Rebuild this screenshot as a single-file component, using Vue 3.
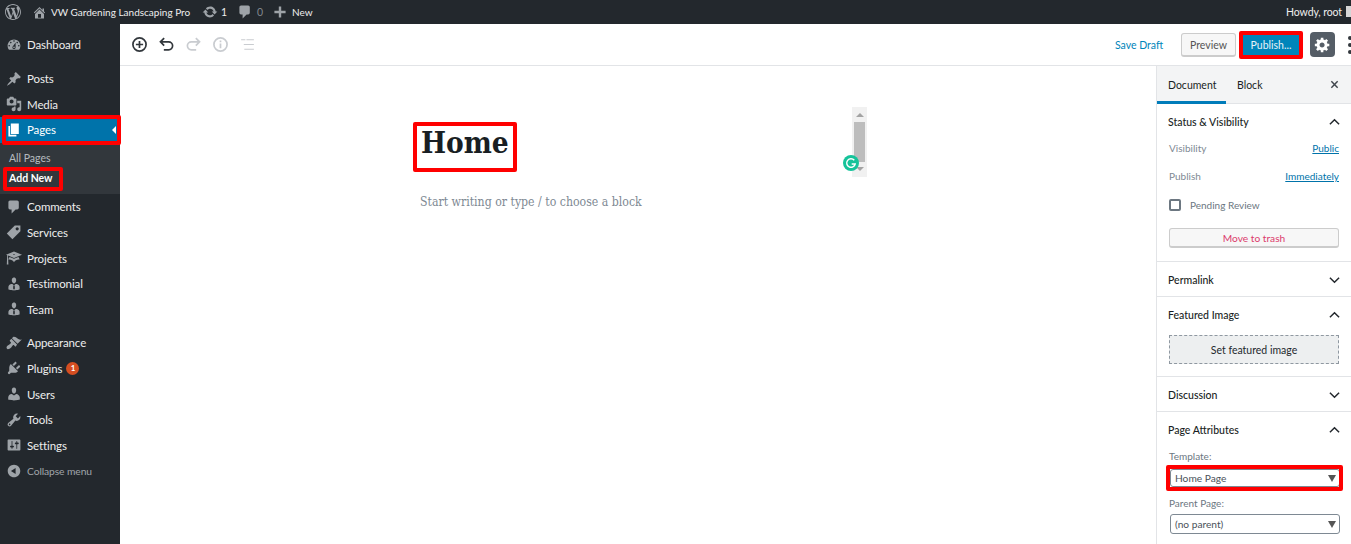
<script setup>
const P = {
  dash: 'M3.76 16h12.48c1.1-1.37 1.76-3.11 1.76-5 0-4.42-3.58-8-8-8s-8 3.58-8 8c0 1.89.66 3.63 1.76 5zM10 4c.55 0 1 .45 1 1s-.45 1-1 1-1-.45-1-1 .45-1 1-1zM6 6c.55 0 1 .45 1 1s-.45 1-1 1-1-.45-1-1 .45-1 1-1zm8 0c.55 0 1 .45 1 1s-.45 1-1 1-1-.45-1-1 .45-1 1-1zm-5.37 5.55L12 7v6c0 1.1-.9 2-2 2s-2-.9-2-2c0-.57.24-1.08.63-1.45zM4 10c.55 0 1 .45 1 1s-.45 1-1 1-1-.45-1-1 .45-1 1-1zm12 0c.55 0 1 .45 1 1s-.45 1-1 1-1-.45-1-1 .45-1 1-1zm-5 3c0-.55-.45-1-1-1s-1 .45-1 1 .45 1 1 1 1-.45 1-1z',
  pin: 'M10.44 3.02l1.82-1.82 6.36 6.35-1.83 1.82c-1.05-.68-2.48-.57-3.41.36l-.75.75c-.92.93-1.04 2.35-.35 3.41l-1.83 1.82-2.41-2.41-2.8 2.79c-.42.42-3.38 2.71-3.8 2.29s1.86-3.39 2.28-3.81l2.79-2.79L4.1 9.36l1.83-1.82c1.05.69 2.48.57 3.4-.36l.75-.75c.93-.92 1.05-2.35.36-3.41z',
  media: 'M13 11V4c0-.55-.45-1-1-1h-1.67L9 1H5L3.67 3H2c-.55 0-1 .45-1 1v7c0 .55.45 1 1 1h10c.55 0 1-.45 1-1zM7 4.5c1.38 0 2.5 1.12 2.5 2.5S8.38 9.5 7 9.5 4.5 8.38 4.5 7 5.62 4.5 7 4.5zM14 6h5v10.5c0 1.38-1.12 2.5-2.5 2.5S14 17.88 14 16.5s1.12-2.5 2.5-2.5c.17 0 .34.02.5.05V9h-3V6zm-4 8.05V13h2v3.5c0 1.38-1.12 2.5-2.5 2.5S7 17.88 7 16.5 8.12 14 9.5 14c.17 0 .34.02.5.05z',
  page: 'M6 15V2h10v13H6zm-1 1h8v2H3V5h2v11z',
  comment: 'M5 2h9c1.1 0 2 .9 2 2v7c0 1.1-.9 2-2 2h-2l-5 5v-5H5c-1.1 0-2-.9-2-2V4c0-1.1.9-2 2-2z',
  tag: 'M11 2h7v7L8 19l-7-7zm3 6c1.1 0 2-.9 2-2s-.9-2-2-2-2 .9-2 2 .9 2 2 2z',
  learn: 'M10 10L2.54 7.02 3 18H1l.48-11.41L0 6l10-4 10 4zm0-5c-.55 0-1 .22-1 .5s.45.5 1 .5 1-.22 1-.5-.45-.5-1-.5zm0 6l5.57-2.23c.71.94 1.2 2.07 1.36 3.3-.3-.04-.61-.07-.93-.07-2.55 0-4.78 1.37-6 3.41C8.78 13.37 6.55 12 4 12c-.32 0-.63.03-.93.07.16-1.23.65-2.36 1.36-3.3z',
  man: 'M7.3 6l-.03-.19c-.04-.37-.05-.73-.03-1.08.02-.36.1-.71.25-1.04.14-.32.31-.61.52-.86s.49-.46.83-.6c.34-.15.72-.23 1.13-.23.69 0 1.26.2 1.71.59s.76.87.91 1.44.18 1.16.09 1.78l-.03.19c-.01.09-.05.25-.11.48-.05.24-.12.47-.2.69-.08.21-.19.45-.34.72-.14.27-.3.49-.47.69-.18.19-.4.34-.67.48-.27.13-.55.19-.86.19s-.59-.06-.87-.19c-.26-.13-.49-.29-.67-.5-.18-.2-.34-.42-.49-.66-.15-.25-.26-.49-.34-.73-.09-.25-.16-.47-.21-.67-.06-.21-.1-.37-.12-.5zm9.2 6.24c.41.7.5 1.41.5 2.14v2.49c0 .03-.12.08-.29.13-.18.04-.42.13-.97.27-.55.12-1.1.24-1.65.34s-1.19.19-1.95.27c-.75.08-1.46.12-2.13.12-.68 0-1.39-.04-2.14-.12-.75-.07-1.4-.17-1.98-.27-.58-.11-1.08-.23-1.56-.34-.49-.11-.8-.21-1.06-.29L3 16.87v-2.49c0-.75.07-1.46.46-2.15s.81-1.25 1.5-1.68C5.66 10.12 7.19 10 8 10l1.67 1.67L9 13v3l1.02 1.08L11 16v-3l-.68-1.33L11.97 10c.77 0 2.2.07 2.9.52.71.45 1.21 1.02 1.63 1.72z',
  brush: 'M14.48 11.06L7.41 3.99l1.5-1.5c.5-.56 2.3-.47 3.51.32 1.21.8 1.43 1.28 2.91 2.1 1.18.64 2.45 1.26 4.45.85zm-.71.71L6.7 4.7 4.93 6.47c-.39.39-.39 1.02 0 1.41l1.06 1.06c.39.39.39 1.03 0 1.42-.6.6-1.43 1.11-2.21 1.69-.35.26-.7.53-1.01.84C1.43 13.23 0 15.57 1 17c.8 1.5 3.77.43 5.11-.91.31-.31.58-.66.84-1.01.58-.78 1.09-1.61 1.69-2.21.39-.39 1.02-.39 1.41 0l1.06 1.06c.39.39 1.02.39 1.41 0z',
  plug: 'M13.11 4.36L9.87 7.6 8 5.73l3.24-3.24c.35-.34 1.05-.2 1.56.32.52.51.66 1.21.31 1.55zm-8 1.77l.91-1.12 9.01 9.01-1.19.84c-.71.71-2.63 1.16-3.82 1.16H6.14L4.9 17.26c-.59.59-1.54.59-2.12 0-.59-.58-.59-1.53 0-2.12l1.24-1.24v-3.88c0-1.13.4-3.19 1.09-3.89zm7.26 3.97l3.24-3.24c.34-.35 1.04-.21 1.55.31.52.51.66 1.21.31 1.55l-3.24 3.25z',
  user: 'M10 9.25c-2.27 0-2.73-3.44-2.73-3.44C7 4.02 7.82 2 9.97 2c2.16 0 2.98 2.02 2.71 3.81 0 0-.41 3.44-2.68 3.44zm0 2.57L12.72 10c2.39 0 4.52 2.33 4.52 4.53v2.49s-3.65 1.13-7.24 1.13c-3.65 0-7.24-1.13-7.24-1.13v-2.49c0-2.25 1.94-4.48 4.47-4.48z',
  tool: 'M16.68 9.77c-1.34 1.34-3.3 1.67-4.95.99l-5.41 6.52c-.99.99-2.59.99-3.58 0s-.99-2.59 0-3.57l6.52-5.42c-.68-1.65-.35-3.61.99-4.95 1.28-1.28 3.12-1.62 4.72-1.06l-2.89 2.89 2.82 2.82 2.86-2.87c.53 1.58.18 3.39-1.08 4.65zM3.81 16.21c.4.39 1.04.39 1.43 0 .4-.4.4-1.04 0-1.43-.39-.4-1.03-.4-1.43 0-.39.39-.39 1.03 0 1.43z',
  sliders: 'M18 16V4c0-.55-.45-1-1-1H3c-.55 0-1 .45-1 1v12c0 .55.45 1 1 1h14c.55 0 1-.45 1-1zM8 11h1c.55 0 1 .45 1 1s-.45 1-1 1H8v1.5c0 .28-.22.5-.5.5s-.5-.22-.5-.5V13H6c-.55 0-1-.45-1-1s.45-1 1-1h1V5.5c0-.28.22-.5.5-.5s.5.22.5.5V11zm5-2h-1c-.55 0-1-.45-1-1s.45-1 1-1h1V5.5c0-.28.22-.5.5-.5s.5.22.5.5V7h1c.55 0 1 .45 1 1s-.45 1-1 1h-1v5.5c0 .28-.22.5-.5.5s-.5-.22-.5-.5V9z',
  collapse: 'M10 2.16c4.33 0 7.84 3.51 7.84 7.84s-3.51 7.84-7.84 7.84S2.16 14.33 2.16 10 5.71 2.16 10 2.16zm2 11.72V6.12L6.18 9.97z',
  home: 'M16 8.5l1.53 1.53-1.06 1.06L10 4.62l-6.47 6.47-1.06-1.06L10 2.5l4 4v-2h2v4zm-6-2.46l6 5.99V18H4v-5.97zM12 17v-5H8v5h4z',
  update: 'M10.2 3.28c3.53 0 6.43 2.61 6.92 6h2.08l-3.5 4-3.5-4h2.32c-.45-1.97-2.21-3.45-4.32-3.45-1.45 0-2.73.71-3.54 1.78L4.95 5.66C6.23 4.2 8.11 3.28 10.2 3.28zm-.4 13.44c-3.52 0-6.43-2.61-6.92-6H.8l3.5-4c1.17 1.33 2.33 2.67 3.5 4H5.48c.45 1.97 2.21 3.45 4.32 3.45 1.45 0 2.73-.71 3.54-1.78l1.71 1.95c-1.28 1.46-3.15 2.38-5.25 2.38z',
  plus: 'M17 8.5v3h-5.5V17h-3v-5.5H3v-3h5.5V3h3v5.5z',
  wp: 'M20 10c0-5.51-4.49-10-10-10C4.48 0 0 4.49 0 10c0 5.52 4.48 10 10 10 5.51 0 10-4.48 10-10zM7.78 15.37L4.37 6.22c.55-.02 1.17-.08 1.17-.08.5-.06.44-1.13-.06-1.11 0 0-1.45.11-2.37.11-.18 0-.37 0-.58-.01C4.12 2.69 6.87 1.11 10 1.11c2.33 0 4.45.87 6.05 2.34-.68-.11-1.65.39-1.65 1.58 0 .74.45 1.36.9 2.1.35.61.55 1.36.55 2.46 0 1.49-1.4 5-1.4 5l-3.03-8.37c.54-.02.82-.17.82-.17.5-.05.44-1.25-.06-1.22 0 0-1.44.12-2.38.12-.87 0-2.33-.12-2.33-.12-.5-.03-.56 1.2-.06 1.22l.92.08 1.26 3.41zM17.41 10c.24-.64.74-1.87.43-4.25.7 1.29 1.05 2.71 1.05 4.25 0 3.29-1.73 6.24-4.4 7.78.97-2.59 1.94-5.2 2.92-7.78zM6.1 18.09C3.12 16.65 1.11 13.53 1.11 10c0-1.3.23-2.48.72-3.59C3.25 10.3 4.67 14.2 6.1 18.09zm4.03-6.63l2.58 6.98c-.86.29-1.76.45-2.71.45-.79 0-1.57-.11-2.29-.33.81-2.38 1.62-4.74 2.42-7.1z',
  gear: 'M18 12h-2.18c-.17.7-.44 1.35-.81 1.93l1.54 1.54-2.1 2.1-1.54-1.54c-.58.36-1.23.63-1.91.79V19H8v-2.18c-.68-.16-1.33-.43-1.91-.79l-1.54 1.54-2.12-2.12 1.54-1.54c-.36-.58-.63-1.23-.79-1.91H1V9.03h2.17c.16-.7.44-1.35.8-1.94L2.43 5.55l2.1-2.1 1.54 1.54c.58-.37 1.24-.64 1.93-.81V2h3v2.18c.68.16 1.33.43 1.91.79l1.54-1.54 2.12 2.12-1.54 1.54c.36.59.64 1.24.8 1.94H18V12zm-8.5 1.5c1.66 0 3-1.34 3-3s-1.34-3-3-3-3 1.34-3 3 1.34 3 3 3z'
}
const groupA = [
  { label: 'Posts', icon: 'pin' },
  { label: 'Media', icon: 'media' }
]
const groupB = [
  { label: 'Comments', icon: 'comment' },
  { label: 'Services', icon: 'tag' },
  { label: 'Projects', icon: 'learn' },
  { label: 'Testimonial', icon: 'man' },
  { label: 'Team', icon: 'man' }
]
const groupC = [
  { label: 'Appearance', icon: 'brush' },
  { label: 'Plugins', icon: 'plug', badge: '1' },
  { label: 'Users', icon: 'user' },
  { label: 'Tools', icon: 'tool' },
  { label: 'Settings', icon: 'sliders' }
]
</script>

<template>
  <div class="page">
    <header class="adminbar">
      <svg class="bar-wp" viewBox="0 0 20 20"><path :d="P.wp" /></svg>
      <svg class="bar-home" viewBox="0 0 20 20"><path :d="P.home" /></svg>
      <span class="bar-site">VW Gardening Landscaping Pro</span>
      <svg class="bar-update" viewBox="0 0 20 20"><path :d="P.update" /></svg>
      <span class="bar-one">1</span>
      <svg class="bar-comment" viewBox="0 0 20 20"><path :d="P.comment" /></svg>
      <span class="bar-zero">0</span>
      <svg class="bar-plus" viewBox="0 0 20 20"><path :d="P.plus" /></svg>
      <span class="bar-new">New</span>
      <span class="bar-howdy">Howdy, root</span>
      <span class="bar-avatar"></span>
    </header>

    <div class="body">
      <nav class="menu">
        <div class="row">
          <svg viewBox="0 0 20 20"><path :d="P.dash" /></svg><span>Dashboard</span>
        </div>
        <div class="group">
          <div v-for="it in groupA" :key="it.label" class="row">
            <svg viewBox="0 0 20 20"><path :d="P[it.icon]" /></svg><span>{{ it.label }}</span>
          </div>
          <div class="row current">
            <svg viewBox="0 0 20 20"><path :d="P.page" /></svg><span>Pages</span>
            <i class="caret"></i>
          </div>
          <div class="sub">
            <div class="sub-item">All Pages</div>
            <div class="sub-item active">Add New</div>
          </div>
          <div v-for="it in groupB" :key="it.label" class="row">
            <svg viewBox="0 0 20 20"><path :d="P[it.icon]" /></svg><span>{{ it.label }}</span>
          </div>
        </div>
        <div class="group">
          <div v-for="it in groupC" :key="it.label" class="row">
            <svg viewBox="0 0 20 20"><path :d="P[it.icon]" /></svg><span>{{ it.label }}</span>
            <b v-if="it.badge" class="badge">{{ it.badge }}</b>
          </div>
          <div class="row collapse">
            <svg viewBox="0 0 20 20"><path :d="P.collapse" /></svg><span>Collapse menu</span>
          </div>
        </div>
      </nav>

      <div class="workspace">
        <div class="toolbar">
          <div class="tools">
            <svg class="t-icon" viewBox="0 0 16 16"><circle cx="8" cy="8" r="6.2" /><path d="M8 4.6v6.8M4.6 8h6.8" /></svg>
            <svg class="t-icon" viewBox="0 0 16 16"><path d="M2.5 5.5h7.5a3.6 3.6 0 0 1 0 7.5H5.5M5.8 2 2.3 5.5 5.8 9" /></svg>
            <svg class="t-icon off" viewBox="0 0 16 16"><path d="M13.5 5.5H6a3.6 3.6 0 0 0 0 7.5h4.5M10.2 2l3.5 3.5L10.2 9" /></svg>
            <svg class="t-icon off" viewBox="0 0 16 16"><circle cx="8" cy="8" r="6.2" /><path d="M8 7v4.5M8 4.2v1.6" /></svg>
            <svg class="t-icon off list" viewBox="0 0 16 16"><path d="M2 3.5h4M4.5 8H14M5 12.5h9M7 3.5h7" /></svg>
          </div>
          <div class="actions">
            <span class="save">Save Draft</span>
            <span class="preview">Preview</span>
            <span class="publish">Publish...</span>
            <span class="gear"><svg viewBox="0 0 20 20"><path :d="P.gear" /></svg></span>
            <span class="dots"><i></i><i></i><i></i></span>
          </div>
        </div>

        <div class="main">
          <section class="editor">
            <h1 class="title">Home</h1>
            <p class="placeholder">Start writing or type / to choose a block</p>
            <div class="scrollbit">
              <i class="up"></i>
              <i class="thumb"></i>
              <i class="down"></i>
            </div>
            <div class="grammarly">
              <svg viewBox="0 0 16 16"><path d="M11.3 5.2A4.3 4.3 0 1 0 12.2 9H8.7" /></svg>
            </div>
          </section>

          <aside class="panel">
            <div class="tabs">
              <span class="tab on">Document</span>
              <span class="tab">Block</span>
              <svg class="close" viewBox="0 0 10 10"><path d="M1.5 1.5l7 7M8.5 1.5l-7 7" /></svg>
            </div>

            <section class="sec status">
              <div class="sec-head">Status &amp; Visibility<svg class="chev" viewBox="0 0 12 8"><path d="M1 6.5l5-5 5 5" /></svg></div>
              <div class="kv first"><span>Visibility</span><a>Public</a></div>
              <div class="kv"><span>Publish</span><a>Immediately</a></div>
              <label class="check"><i></i>Pending Review</label>
              <div class="trash">Move to trash</div>
            </section>

            <section class="sec">
              <div class="sec-head">Permalink<svg class="chev" viewBox="0 0 12 8"><path d="M1 1.5l5 5 5-5" /></svg></div>
            </section>

            <section class="sec featured">
              <div class="sec-head">Featured Image<svg class="chev" viewBox="0 0 12 8"><path d="M1 6.5l5-5 5 5" /></svg></div>
              <div class="setimg">Set featured image</div>
            </section>

            <section class="sec">
              <div class="sec-head">Discussion<svg class="chev" viewBox="0 0 12 8"><path d="M1 1.5l5 5 5-5" /></svg></div>
            </section>

            <section class="sec attrs">
              <div class="sec-head">Page Attributes<svg class="chev" viewBox="0 0 12 8"><path d="M1 6.5l5-5 5 5" /></svg></div>
              <div class="lab">Template:</div>
              <div class="sel"><span>Home Page</span><i></i></div>
              <div class="lab second">Parent Page:</div>
              <div class="sel tall"><span>(no parent)</span><i></i></div>
            </section>
          </aside>
        </div>
      </div>
    </div>

    <div class="mark m-pages"></div>
    <div class="mark m-add"></div>
    <div class="mark m-home"></div>
    <div class="mark m-pub"></div>
    <div class="mark m-tpl"></div>
  </div>
</template>

<style>
html, body { margin: 0; background: #fff; overflow: hidden; }
</style>

<style scoped>
.page {
  position: relative;
  width: 1351px;
  height: 544px;
  overflow: hidden;
  font-family: Lato, "Noto Sans", sans-serif;
  font-size: 12px;
  color: #23282d;
  display: flex;
  flex-direction: column;
}
svg { display: block; flex: none; }

/* admin bar */
.adminbar {
  height: 24px;
  flex: none;
  background: #23282d;
  color: #eee;
  display: flex;
  align-items: center;
  font-size: 10.5px;
}
.adminbar svg { fill: #9ea3a8; }
.bar-wp { width: 16px; height: 16px; margin-left: 5px; }
.bar-home { width: 15px; height: 15px; margin-left: 11px; }
.bar-site { margin-left: 4px; width: 141px; white-space: nowrap; font-size: 10px; }
.bar-update { width: 16px; height: 16px; margin-left: 10px; }
.bar-one { margin-left: 3px; width: 14px; }
.bar-comment { width: 16px; height: 16px; margin-left: 2px; }
.bar-zero { margin-left: 4px; color: #82878c; width: 15px; }
.bar-plus { width: 16px; height: 16px; }
.bar-new { margin-left: 4px; font-size: 10px; }
.bar-howdy { margin-left: auto; white-space: nowrap; letter-spacing: -.1px; }
.bar-avatar { width: 5px; height: 11px; background: #d6d6d6; margin-left: 4px; margin-bottom: 1px; }

.body { flex: 1; display: flex; min-height: 0; }

/* left menu */
.menu {
  width: 120px;
  flex: none;
  background: #23282d;
  box-sizing: border-box;
  padding-top: 8.2px;
  color: #eee;
  font-size: 11.5px;
  letter-spacing: -.1px;
}
.group { margin-top: 8px; }
.row {
  height: 25.6px;
  display: flex;
  align-items: center;
  position: relative;
}
.row svg { width: 16px; height: 16px; margin-left: 6px; margin-right: 5px; fill: #9ea3a8; }
.row.current { background: #0073aa; color: #fff; }
.row.current svg { fill: #fff; }
.caret {
  position: absolute;
  right: 4px;
  top: 50%;
  margin-top: -4px;
  border: 4px solid transparent;
  border-right-color: #fff;
  border-left-width: 0;
}
.badge {
  margin-left: 4px;
  width: 13px;
  height: 13px;
  border-radius: 50%;
  background: #d54e21;
  color: #fff;
  font-size: 8px;
  line-height: 13px;
  text-align: center;
  font-weight: 700;
}
.collapse { color: #a0a5aa; font-size: 10.3px; }
.sub {
  background: #32373c;
  height: 51.5px;
  box-sizing: border-box;
  padding: 5px 0 0 9px;
}
.sub-item { height: 20px; line-height: 20px; font-size: 10.5px; letter-spacing: 0; color: rgba(240, 245, 250, .7); }
.sub-item.active { color: #fff; font-weight: 700; }

/* workspace */
.workspace { flex: 1; min-width: 0; display: flex; flex-direction: column; background: #fff; }
.toolbar {
  height: 42px;
  flex: none;
  box-sizing: border-box;
  border-bottom: 1px solid #e2e4e7;
  display: flex;
  align-items: center;
  justify-content: space-between;
}
.tools { display: flex; align-items: center; margin-left: 11px; gap: 10px; }
.t-icon { width: 17px; height: 17px; fill: none; stroke: #32373c; stroke-width: 1.6; }
.t-icon.off { stroke: #c9ccd0; }
.t-icon.list { stroke-width: 1.1; }
.actions { display: flex; align-items: center; height: 100%; font-size: 10.5px; }
.save { color: #0085ba; width: 66px; white-space: nowrap; }
.preview {
  width: 55px;
  height: 24px;
  box-sizing: border-box;
  padding-top: 1px;
  border: 1px solid #ccc;
  border-bottom-width: 2px;
  border-radius: 3px;
  background: #f7f7f7;
  color: #555;
  display: flex;
  align-items: center;
  justify-content: center;
}
.publish {
  margin-left: 7px;
  width: 56px;
  height: 20px;
  background: #0085ba;
  color: #e6f3f8;
  display: flex;
  align-items: center;
  justify-content: center;
}
.gear {
  margin-left: 11px;
  width: 25px;
  height: 25px;
  border-radius: 4px;
  background: #555d66;
  display: flex;
  align-items: center;
  justify-content: center;
}
.gear svg { width: 17px; height: 17px; fill: #fff; }
.dots { margin-left: 13px; margin-right: -1px; width: 4px; display: flex; flex-direction: column; gap: 3px; }
.dots i { width: 4px; height: 4px; border-radius: 50%; background: #32373c; }

.main { flex: 1; display: flex; min-height: 0; }
.editor { flex: 1; position: relative; min-width: 0; }
.title {
  margin: 57px 0 0 301px;
  font-family: "DejaVu Serif Condensed", "DejaVu Serif", serif;
  font-stretch: condensed;
  font-weight: 700;
  font-size: 29.5px;
  line-height: 40px;
  color: #191e23;
}
.placeholder {
  margin: 29px 0 0 300px;
  font-family: "DejaVu Serif Condensed", "DejaVu Serif", serif;
  font-stretch: condensed;
  font-size: 12.2px;
  line-height: 20px;
  color: #7e8993;
}
.scrollbit {
  position: absolute;
  left: 732px;
  top: 41px;
  width: 15px;
  height: 70px;
  background: #f1f1f1;
}
.scrollbit i { position: absolute; }
.up { left: 4px; top: 6px; border: 4px solid transparent; border-top-width: 0; border-bottom: 4px solid #a3a3a3; }
.thumb { left: 2px; top: 15px; width: 11px; height: 40px; background: #bdbdbd; }
.down { left: 4px; top: 60px; border: 4px solid transparent; border-bottom-width: 0; border-top: 4px solid #a3a3a3; }
.grammarly {
  position: absolute;
  left: 723px;
  top: 89px;
  width: 16px;
  height: 16px;
  border-radius: 50%;
  background: #15c39a;
}
.grammarly svg { width: 16px; height: 16px; fill: none; stroke: #fff; stroke-width: 1.4; }

/* right panel */
.panel {
  width: 195px;
  flex: none;
  box-sizing: border-box;
  border-left: 1px solid #e2e4e7;
  overflow: hidden;
}
.tabs {
  height: 38px;
  box-sizing: border-box;
  background: #f3f4f5;
  border-bottom: 1px solid #e2e4e7;
  display: flex;
  align-items: stretch;
  position: relative;
}
.tab {
  padding: 0 11px;
  display: flex;
  align-items: center;
  font-size: 10.5px;
  color: #191e23;
  margin-bottom: -1px;
}
.tab.on { border-bottom: 3px solid #007cba; padding-top: 3px; width: 69px; box-sizing: border-box; }
.close { position: absolute; right: 12px; top: 14px; width: 9px; height: 9px; fill: none; stroke: #40464d; stroke-width: 1.6; }
.sec { border-bottom: 1px solid #e2e4e7; padding: 0 12px; }
.sec-head {
  height: 34px;
  box-sizing: border-box;
  padding-top: 1px;
  margin-left: -1px;
  display: flex;
  align-items: center;
  justify-content: space-between;
  font-size: 10.5px;
  font-weight: 500;
  color: #191e23;
}
.chev { width: 11px; height: 8px; fill: none; stroke: #23282d; stroke-width: 1.6; margin-right: -1px; }
.status { height: 158px; box-sizing: border-box; }
.kv { display: flex; justify-content: space-between; height: 28px; align-items: center; font-size: 10px; color: #7e8993; }
.kv.first { margin-top: -4px; }
.kv a { color: #0073aa; text-decoration: underline; }
.check { display: flex; align-items: center; gap: 9px; height: 30px; font-size: 10px; color: #6c7781; }
.check i { width: 8px; height: 8px; border: 2px solid #6c7781; border-radius: 2px; }
.trash {
  margin-top: 8px;
  height: 20px;
  box-sizing: border-box;
  border: 1px solid #ccc;
  border-bottom-width: 2px;
  border-radius: 3px;
  background: #f7f7f7;
  color: #dc3b6c;
  font-size: 10.2px;
  display: flex;
  align-items: center;
  justify-content: center;
}
.featured { height: 80px; box-sizing: border-box; }
.setimg {
  margin-top: 4px;
  height: 29px;
  box-sizing: border-box;
  border: 1px dashed #8f98a1;
  background: #edeff0;
  color: #23282d;
  font-size: 10.5px;
  display: flex;
  align-items: center;
  justify-content: center;
}
.attrs { border-bottom: 0; }
.lab { font-size: 10px; color: #6c7781; margin-top: 2px; height: 17px; line-height: 17px; }
.lab.second { margin-top: 9px; height: 14px; line-height: 14px; }
.sel {
  margin: 4px -1px 0 1px;
  height: 18px;
  box-sizing: border-box;
  border: 1px solid #7e8993;
  border-radius: 3px;
  display: flex;
  align-items: center;
  justify-content: space-between;
  padding: 0 3px 0 4px;
  font-size: 10.2px;
  color: #4a525a;
}
.sel.tall { margin-top: 4px; height: 20px; }
.sel i { border: 4px solid transparent; border-bottom-width: 0; border-top: 7px solid #555; }

/* red annotation boxes */
.mark { position: absolute; box-sizing: border-box; border: 4px solid #f00; border-radius: 2px; }
.m-pages { left: 2px; top: 115px; width: 119px; height: 30px; }
.m-add { left: 3px; top: 167px; width: 60px; height: 24px; }
.m-home { left: 413px; top: 122px; width: 104px; height: 50px; }
.m-pub { left: 1239px; top: 31px; width: 64px; height: 28px; }
.m-tpl { left: 1166px; top: 465px; width: 177px; height: 26px; }
</style>
